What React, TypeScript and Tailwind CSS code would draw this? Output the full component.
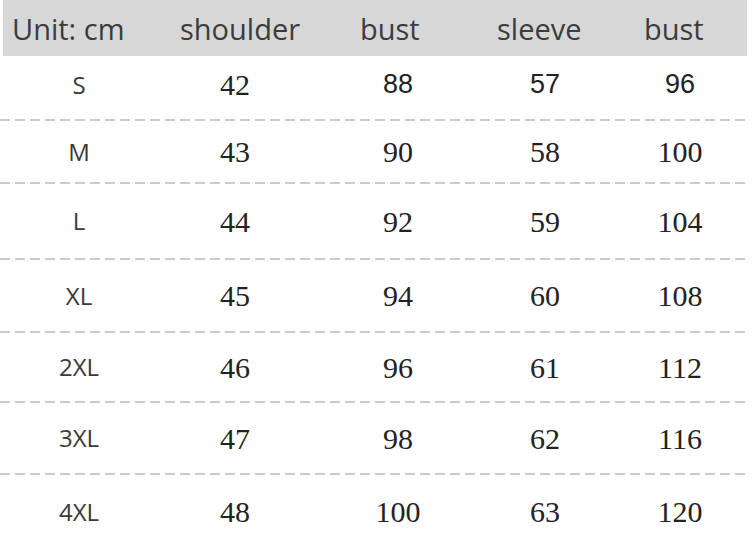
const rows = [
  { size: "S", vals: ["42", "88", "57", "96"], h: "h-[63px] pb-[6px]", sansFrom: 1 },
  { size: "M", vals: ["43", "90", "58", "100"], h: "h-[61px]", sansFrom: 9 },
  { size: "L", vals: ["44", "92", "59", "104"], h: "h-[74px]", sansFrom: 9 },
  { size: "XL", vals: ["45", "94", "60", "108"], h: "h-[71px]", sansFrom: 9 },
  { size: "2XL", vals: ["46", "96", "61", "112"], h: "h-[68px]", sansFrom: 9 },
  { size: "3XL", vals: ["47", "98", "62", "116"], h: "h-[70px]", sansFrom: 9 },
  { size: "4XL", vals: ["48", "100", "63", "120"], h: "h-[77px] pb-[4px]", sansFrom: 9 },
];

function Dashes() {
  return (
    <div className="h-[2px] w-[745px] bg-[repeating-linear-gradient(90deg,#cbcbcb_0_10px,transparent_10px_15px)]" />
  );
}

export default function App() {
  return (
    <main className="w-[754px] h-[552px] bg-white overflow-hidden">
      <div className="ml-[3px] w-[744px] h-[56px] bg-[#d7d7d7] grid grid-cols-[168px_180px_137px_147px_1fr] items-center pl-[9px] pt-[2px] font-['Open_Sans',sans-serif] text-[29px] text-[#3c3c3c]">
        <span>Unit: cm</span>
        <span>shoulder</span>
        <span>bust</span>
        <span>sleeve</span>
        <span>bust</span>
      </div>

      {rows.map((row, i) => (
        <div key={row.size}>
          {i > 0 && <Dashes />}
          <div
            className={`${row.h} grid grid-cols-[158px_154px_172px_122px_148px] items-center text-center`}
          >
            <span className="font-['Open_Sans',sans-serif] text-[24px] text-[#3a3a3a]">
              {row.size}
            </span>
            {row.vals.map((v, j) => (
              <span
                key={j}
                className={
                  j >= row.sansFrom
                    ? "font-['Liberation_Sans',Arial,sans-serif] text-[27px] text-[#222]"
                    : "font-['Liberation_Serif',serif] text-[30px] text-[#222]"
                }
              >
                {v}
              </span>
            ))}
          </div>
        </div>
      ))}
    </main>
  );
}
